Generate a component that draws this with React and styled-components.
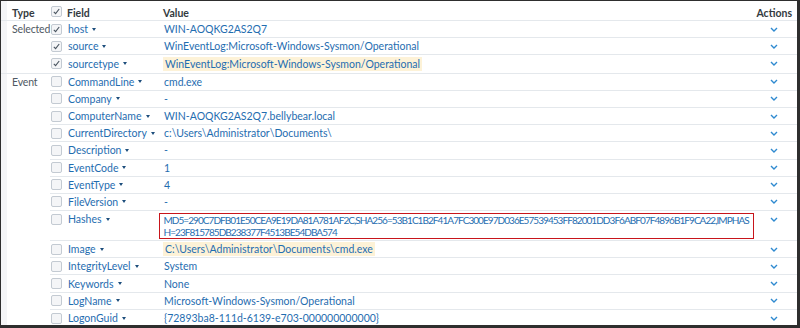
import React from "react";
import styled, { createGlobalStyle } from "styled-components";

const GlobalStyle = createGlobalStyle`
  html, body {
    margin: 0;
    padding: 0;
    background: #ffffff;
  }
  body {
    font-family: "Lato", "Liberation Sans", sans-serif;
  }
`;

const SELECTED = [
  { field: "host", value: "WIN-AOQKG2AS2Q7", checked: true },
  {
    field: "source",
    value: "WinEventLog:Microsoft-Windows-Sysmon/Operational",
    checked: true,
  },
  {
    field: "sourcetype",
    value: "WinEventLog:Microsoft-Windows-Sysmon/Operational",
    checked: true,
    highlight: true,
  },
];

const EVENT = [
  { field: "CommandLine", value: "cmd.exe" },
  { field: "Company", value: "-" },
  { field: "ComputerName", value: "WIN-AOQKG2AS2Q7.bellybear.local" },
  { field: "CurrentDirectory", value: "c:\\Users\\Administrator\\Documents\\" },
  { field: "Description", value: "-" },
  { field: "EventCode", value: "1" },
  { field: "EventType", value: "4" },
  { field: "FileVersion", value: "-" },
  {
    field: "Hashes",
    lines: [
      "MD5=290C7DFB01E50CEA9E19DA81A781AF2C,SHA256=53B1C1B2F41A7FC300E97D036E57539453FF82001DD3F6ABF07F4896B1F9CA22,IMPHAS",
      "H=23F815785DB238377F4513BE54DBA574",
    ],
  },
  {
    field: "Image",
    value: "C:\\Users\\Administrator\\Documents\\cmd.exe",
    highlight: true,
  },
  { field: "IntegrityLevel", value: "System" },
  { field: "Keywords", value: "None" },
  { field: "LogName", value: "Microsoft-Windows-Sysmon/Operational" },
  { field: "LogonGuid", value: "{72893ba8-111d-6139-e703-000000000000}" },
];

const Chevron = () => (
  <svg width="8" height="5" viewBox="0 0 8 5">
    <polyline
      points="1,1 4,4 7,1"
      fill="none"
      stroke="#2f8ad0"
      strokeWidth="1.4"
    />
  </svg>
);

const Tick = () => (
  <svg width="7" height="7" viewBox="0 0 7 7">
    <polyline
      points="0.8,3.8 2.6,5.6 6.2,1"
      fill="none"
      stroke="#4a5560"
      strokeWidth="1.1"
    />
  </svg>
);

const Fields = () => {
  const renderRow = (item, isLast) => (
    <Row key={item.field} $last={isLast} $tall={!!item.lines}>
      <CheckCell>
        <Checkbox>{item.checked ? <Tick /> : null}</Checkbox>
      </CheckCell>
      <FieldCell>
        {item.field}
        <Caret />
      </FieldCell>
      <ValueCell $tall={!!item.lines}>
        {item.lines ? (
          <HashBox>
            {item.lines.map((line) => (
              <div key={line}>{line}</div>
            ))}
          </HashBox>
        ) : item.highlight ? (
          <Highlight>{item.value}</Highlight>
        ) : (
          item.value
        )}
      </ValueCell>
      <ActionCell>
        <Chevron />
      </ActionCell>
    </Row>
  );

  return (
    <Frame>
      <GlobalStyle />
      <HeaderRow>
        <TypeHead>Type</TypeHead>
        <CheckCell>
          <Checkbox $head>
            <Tick />
          </Checkbox>
        </CheckCell>
        <HeadText>Field</HeadText>
        <HeadText>Value</HeadText>
        <HeadText $right>Actions</HeadText>
      </HeaderRow>
      <Group>
        <TypeLabel>Selected</TypeLabel>
        <Rows>
          {SELECTED.map((item, i) => renderRow(item, i === SELECTED.length - 1))}
        </Rows>
      </Group>
      <Group>
        <TypeLabel>Event</TypeLabel>
        <Rows>
          {EVENT.map((item, i) => renderRow(item, i === EVENT.length - 1))}
        </Rows>
      </Group>
    </Frame>
  );
};

const Frame = styled.div`
  width: 800px;
  height: 328px;
  box-sizing: border-box;
  overflow: hidden;
  background: #ffffff;
  border-top: 1px solid #2e2e2e;
  border-left: 1px solid #2e2e2e;
  border-right: 3px solid #2e2e2e;
  border-bottom: 3px solid #2e2e2e;
  box-shadow: inset 6px 0 0 #f4f5f7;
  font-size: 10.5px;
  color: #3c444d;
`;

const HeaderRow = styled.div`
  display: grid;
  grid-template-columns: 49px 17px 96px 1fr 60px;
  height: 20px;
  box-sizing: border-box;
  border-bottom: 1px solid #e4e8ec;
  align-items: center;
  font-weight: 700;
  color: #333a40;
`;

const TypeHead = styled.div`
  padding-left: 11px;
  padding-top: 5px;
`;

const HeadText = styled.div`
  padding-top: 5px;
  text-align: ${(p) => (p.$right ? "right" : "left")};
  padding-right: ${(p) => (p.$right ? "5px" : "0")};
`;

const Group = styled.div`
  display: flex;
  border-bottom: 1px solid #e4e8ec;
`;

const TypeLabel = styled.div`
  width: 49px;
  flex-shrink: 0;
  padding-left: 11px;
  box-sizing: border-box;
  line-height: 17px;
  letter-spacing: -0.15px;
  white-space: nowrap;
  color: #4f5963;
`;

const Rows = styled.div`
  flex: 1;
`;

const Row = styled.div`
  display: grid;
  grid-template-columns: 17px 92px 1fr 41px;
  height: ${(p) => (p.$tall ? "30px" : "17.2px")};
  box-sizing: border-box;
  border-bottom: ${(p) => (p.$last ? "none" : "1px solid #e4e8ec")};
  align-items: ${(p) => (p.$tall ? "start" : "center")};
  color: #1f6db0;
`;

const CheckCell = styled.div`
  display: flex;
  align-items: center;
  height: 16.2px;
`;

const Checkbox = styled.div`
  width: 9px;
  height: 9px;
  margin-left: 1px;
  margin-top: ${(p) => (p.$head ? "1px" : "0")};
  border: 1px solid #c3cad2;
  border-radius: 2px;
  background: #f4f5f7;
  display: flex;
  align-items: center;
  justify-content: center;
`;

const FieldCell = styled.div`
  display: flex;
  align-items: center;
  height: 16.2px;
  padding-left: 1px;
  white-space: nowrap;
`;

const Caret = styled.span`
  display: inline-block;
  margin-left: 4px;
  width: 0;
  height: 0;
  border-left: 2.5px solid transparent;
  border-right: 2.5px solid transparent;
  border-top: 3px solid #1d4e7c;
`;

const ValueCell = styled.div`
  display: flex;
  align-items: center;
  align-self: ${(p) => (p.$tall ? "center" : "auto")};
  height: ${(p) => (p.$tall ? "auto" : "16.2px")};
  padding-left: 5px;
  white-space: nowrap;
`;

const Highlight = styled.span`
  background: #fdf2d7;
  padding: 1px 2px;
  margin-left: -1px;
`;

const HashBox = styled.div`
  margin-left: -5px;
  width: 595px;
  box-sizing: border-box;
  border: 1.5px solid #c8151b;
  padding: 0 0 0 3.5px;
  line-height: 12px;
  font-size: 10px;
  letter-spacing: -0.94px;
`;

const ActionCell = styled.div`
  display: flex;
  align-items: center;
  justify-content: flex-end;
  padding-right: 19px;
  height: 16.2px;
`;

export default function App() {
  return <Fields />;
}
